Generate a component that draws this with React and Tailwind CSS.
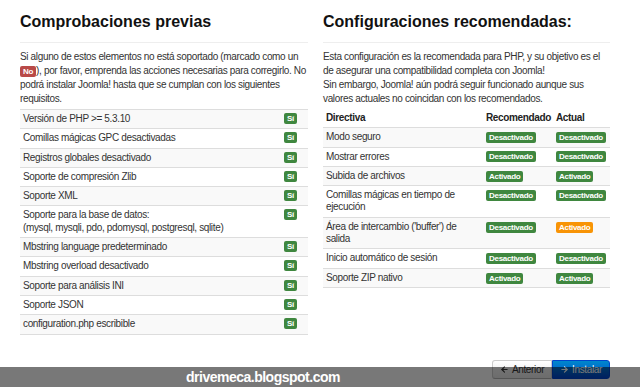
import { ArrowLeft, ArrowRight } from "lucide-react";

const checks = [
  ["Versión de PHP >= 5.3.10"],
  ["Comillas mágicas GPC desactivadas"],
  ["Registros globales desactivado"],
  ["Soporte de compresión Zlib"],
  ["Soporte XML"],
  ["Soporte para la base de datos:", "(mysql, mysqli, pdo, pdomysql, postgresql, sqlite)"],
  ["Mbstring language predeterminado"],
  ["Mbstring overload desactivado"],
  ["Soporte para análisis INI"],
  ["Soporte JSON"],
  ["configuration.php escribible"],
];

const settings = [
  { name: ["Modo seguro"], rec: "Desactivado", cur: "Desactivado" },
  { name: ["Mostrar errores"], rec: "Desactivado", cur: "Desactivado" },
  { name: ["Subida de archivos"], rec: "Activado", cur: "Activado" },
  { name: ["Comillas mágicas en tiempo de", "ejecución"], rec: "Desactivado", cur: "Desactivado" },
  { name: ["Área de intercambio ('buffer') de", "salida"], rec: "Desactivado", cur: "Activado", warn: true },
  { name: ["Inicio automático de sesión"], rec: "Desactivado", cur: "Desactivado" },
  { name: ["Soporte ZIP nativo"], rec: "Activado", cur: "Activado" },
];

function Badge({ children, color = "bg-[#3f873f]" }) {
  return (
    <span
      className={`inline-block ${color} text-white font-bold text-[8px] tracking-[-0.3px] leading-[11px] px-[3px] rounded-[2px] align-middle`}
    >
      {children}
    </span>
  );
}

export default function App() {
  return (
    <div className="relative w-[640px] h-[387px] overflow-hidden bg-white text-[#333] font-['Liberation_Sans',Arial,sans-serif]">
      <div className="pl-[20px] pr-[30px]">
        <div className="grid grid-cols-[288px_287px] gap-x-[15px]">
          {/* Left column */}
          <div>
            <h2 className="pt-[12px] text-[16px] leading-[20px] font-bold text-[#111]">
              Comprobaciones previas
            </h2>
            <div className="mt-[10px] h-px bg-[#eee]" />
            <p className="mt-[7px] text-[10px] tracking-[-0.35px] leading-[14px] whitespace-nowrap">
              Si alguno de estos elementos no está soportado (marcado como un
              <br />
              <Badge color="bg-[#b94a48]">No</Badge>), por favor, emprenda las acciones necesarias para corregirlo. No
              <br />
              podrá instalar Joomla! hasta que se cumplan con los siguientes
              <br />
              requisitos.
            </p>
            <div className="mt-[3px] border-b border-[#ddd]">
              {checks.map((lines, i) => (
                <div
                  key={i}
                  className={`flex items-start justify-between border-t border-[#ddd] py-[3px] pl-[3px] pr-[11px] text-[10px] tracking-[-0.35px] leading-[12.3px] ${
                    i % 2 === 0 ? "bg-[#f9f9f9]" : "bg-white"
                  }`}
                >
                  <div>
                    {lines.map((l) => (
                      <div key={l}>{l}</div>
                    ))}
                  </div>
                  <Badge>Sí</Badge>
                </div>
              ))}
            </div>
          </div>

          {/* Right column */}
          <div>
            <h2 className="pt-[12px] text-[16px] leading-[20px] font-bold text-[#111]">
              Configuraciones recomendadas:
            </h2>
            <div className="mt-[10px] h-px bg-[#eee]" />
            <p className="mt-[7px] text-[10px] tracking-[-0.35px] leading-[14px] whitespace-nowrap">
              Esta configuración es la recomendada para PHP, y su objetivo es el
              <br />
              de asegurar una compatibilidad completa con Joomla!
              <br />
              Sin embargo, Joomla! aún podrá seguir funcionado aunque sus
              <br />
              valores actuales no coincidan con los recomendados.
            </p>
            <div className="mt-[3px] border-b border-[#ddd] text-[10px] tracking-[-0.35px] leading-[12.3px]">
              <div className="grid grid-cols-[160px_70px_57px] py-[3px] font-bold text-[#222]">
                <div className="pl-[3px]">Directiva</div>
                <div className="pl-[3px]">Recomendado</div>
                <div className="pl-[3px]">Actual</div>
              </div>
              {settings.map((s, i) => (
                <div
                  key={i}
                  className={`grid grid-cols-[160px_70px_57px] border-t border-[#ddd] py-[3px] ${
                    i % 2 === 0 ? "bg-[#f9f9f9]" : "bg-white"
                  }`}
                >
                  <div className="pl-[3px]">
                    {s.name.map((l) => (
                      <div key={l}>{l}</div>
                    ))}
                  </div>
                  <div className="pl-[3px]">
                    <Badge>{s.rec}</Badge>
                  </div>
                  <div className="pl-[3px]">
                    <Badge color={s.warn ? "bg-[#f89406]" : "bg-[#3f873f]"}>{s.cur}</Badge>
                  </div>
                </div>
              ))}
            </div>
          </div>
        </div>

        <div className="mt-[25px] flex justify-end">
          <button className="flex items-center justify-center gap-[3px] w-[60px] h-[19px] border border-[#ccc] border-b-[#b3b3b3] rounded-l-[3px] bg-gradient-to-b from-white to-[#e6e6e6] text-[10px] tracking-[-0.35px] text-[#333]">
            <ArrowLeft size={9} strokeWidth={3} />
            Anterior
          </button>
          <button className="flex items-center justify-center gap-[3px] w-[58px] h-[19px] border border-[#04c] rounded-r-[3px] bg-gradient-to-b from-[#08c] to-[#04c] text-[10px] tracking-[-0.35px] text-white">
            <ArrowRight size={9} strokeWidth={3} />
            Instalar
          </button>
        </div>
      </div>

      {/* watermark bar */}
      <div className="absolute left-0 right-0 bottom-0 h-[20px] bg-black/[0.53] pl-[186px] text-white font-bold text-[14px] tracking-[-0.5px] leading-[20px]">
        drivemeca.blogspot.com
      </div>
    </div>
  );
}
